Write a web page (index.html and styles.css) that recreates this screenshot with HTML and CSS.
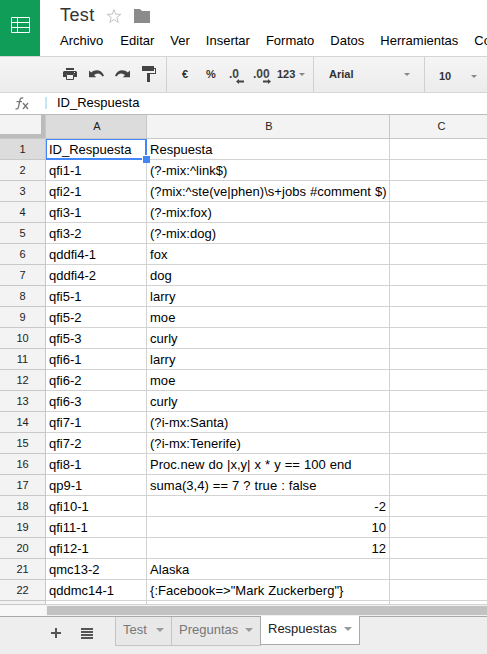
FILE: index.html
```html
<!DOCTYPE html>
<html lang="es">
<head>
<meta charset="utf-8">
<title>Test</title>
<link rel="stylesheet" href="styles.css">
</head>
<body>
<div class="app">
<header class="header">
  <div class="logo">
    <svg width="19" height="16" viewBox="0 0 19 16" fill="none" stroke="#fff"><path d="M.5.5h18v15H.5zM.5 5.5h18M.5 10.5h18M6.500.5v15" /></svg>
  </div>
  <div class="heading">
    <div class="title-row">
      <h1>Test</h1>
      <svg class="star" width="16" height="16" viewBox="0 0 16 16" fill="none" stroke="#c4c4c4"><path d="M8 1.500l1.700 4.700 5.200.100-4.100 3.100 1.500 5L8 11.500l-4.300 2.900 1.500-5L1.100 6.300l5.200-.100z"/></svg>
      <svg class="folder" width="16" height="14" viewBox="0 0 16 14" fill="#8b8b8b"><path d="M0 0h6l2 2h8v12H0z"/></svg>
    </div>
    <nav class="menu"><span>Archivo</span><span>Editar</span><span>Ver</span><span>Insertar</span><span>Formato</span><span>Datos</span><span>Herramientas</span><span>Co</span></nav>
  </div>
</header>
<div class="toolbar">
  <div class="group actions">
    <svg width="14" height="12" viewBox="0 0 14 12"><path fill="#444" d="M3 0h8v2H3zM1 3h12l1 1v5h-3V6H3v3H0V4z"/><path fill="none" stroke="#444" d="M3.500 6.500h7v5h-7z"/><path fill="#eee" d="M11 4h1v1h-1z"/></svg>
    <svg width="15" height="8" viewBox="0 0 15 8" fill="#444"><path d="M0 .5l2.200 2C6-.9 12.500-.8 15 5.800l-1.600.8C11.500 3 8 2.500 5 5l2.200 2.300H0z"/></svg>
    <svg width="15" height="8" viewBox="0 0 15 8" fill="#444"><path d="M15 .5l-2.200 2C9-.9 2.500-.8 0 5.800l1.600.8C3.500 3 7 2.500 10 5L7.800 7.300H15z"/></svg>
    <svg width="14" height="16" viewBox="0 0 14 16" fill="#444"><path d="M0 0h12v2h2v6H8v1h0v7H5V7h8V3h-1v2H0z"/></svg>
  </div>
  <div class="group formats">
    <span class="euro">€</span><span class="percent">%</span>
    <span class="decimal less">.0<svg width="8" height="5" viewBox="0 0 8 5" fill="#444"><path d="M0 2.500L3 0v1.500h5v2H3V5z"/></svg></span>
    <span class="decimal more">.00<svg width="8" height="5" viewBox="0 0 8 5" fill="#444"><path d="M8 2.500L5 0v1.500H0v2h5V5z"/></svg></span>
    <span class="number">123</span><i class="caret"></i>
  </div>
  <div class="group font"><span>Arial</span><i class="caret"></i></div>
  <div class="group size"><span>10</span><i class="caret"></i></div>
</div>
<div class="formula">
  <svg class="fx" width="15" height="14" viewBox="0 0 15 14" fill="none" stroke="#777" stroke-width="1.300"><path d="M8.300 1.200C6.400.3 5.400 1.200 5 3L3.500 9.800C3.100 11.700 2.300 12.300.5 11.800M1.500 4.600h5.500M8 6l5 6M13 6l-5 6"/></svg>
  <span class="divider"></span><span>ID_Respuesta</span>
</div>
<main class="sheet">
<table>
<colgroup><col class="col-n"><col class="col-a"><col class="col-b"><col class="col-c"></colgroup>
<thead><tr><th class="corner"></th><th class="current">A</th><th>B</th><th>C</th></tr></thead>
<tbody>
<tr><th class="current">1</th><td class="selected">ID_Respuesta</td><td>Respuesta</td><td></td></tr>
<tr><th>2</th><td>qfi1-1</td><td>(?-mix:^link$)</td><td></td></tr>
<tr><th>3</th><td>qfi2-1</td><td>(?mix:^ste(ve|phen)\s+jobs #comment $)</td><td></td></tr>
<tr><th>4</th><td>qfi3-1</td><td>(?-mix:fox)</td><td></td></tr>
<tr><th>5</th><td>qfi3-2</td><td>(?-mix:dog)</td><td></td></tr>
<tr><th>6</th><td>qddfi4-1</td><td>fox</td><td></td></tr>
<tr><th>7</th><td>qddfi4-2</td><td>dog</td><td></td></tr>
<tr><th>8</th><td>qfi5-1</td><td>larry</td><td></td></tr>
<tr><th>9</th><td>qfi5-2</td><td>moe</td><td></td></tr>
<tr><th>10</th><td>qfi5-3</td><td>curly</td><td></td></tr>
<tr><th>11</th><td>qfi6-1</td><td>larry</td><td></td></tr>
<tr><th>12</th><td>qfi6-2</td><td>moe</td><td></td></tr>
<tr><th>13</th><td>qfi6-3</td><td>curly</td><td></td></tr>
<tr><th>14</th><td>qfi7-1</td><td>(?i-mx:Santa)</td><td></td></tr>
<tr><th>15</th><td>qfi7-2</td><td>(?i-mx:Tenerife)</td><td></td></tr>
<tr><th>16</th><td>qfi8-1</td><td>Proc.new do |x,y| x * y == 100 end</td><td></td></tr>
<tr><th>17</th><td>qp9-1</td><td>suma(3,4) == 7 ? true : false</td><td></td></tr>
<tr><th>18</th><td>qfi10-1</td><td class="num">-2</td><td></td></tr>
<tr><th>19</th><td>qfi11-1</td><td class="num">10</td><td></td></tr>
<tr><th>20</th><td>qfi12-1</td><td class="num">12</td><td></td></tr>
<tr><th>21</th><td>qmc13-2</td><td>Alaska</td><td></td></tr>
<tr><th>22</th><td>qddmc14-1</td><td>{:Facebook=&gt;"Mark Zuckerberg"}</td><td></td></tr>
<tr class="partial"><th></th><td></td><td></td><td></td></tr>
</tbody>
</table>
<div class="scroll"><div class="thumb"></div></div>
</main>
<footer class="tabs">
  <svg class="add" width="10" height="10" viewBox="0 0 10 10" fill="#555"><path d="M4 0h2v4h4v2H6v4H4V6H0V4h4z"/></svg>
  <svg class="list" width="12" height="11" viewBox="0 0 12 11" fill="#555"><path d="M0 0h12v2H0zM0 3h12v2H0zM0 6h12v2H0zM0 9h12v2H0z"/></svg>
  <div class="tab test"><span>Test</span><i class="caret"></i></div>
  <div class="tab preguntas"><span>Preguntas</span><i class="caret"></i></div>
  <div class="tab active"><span>Respuestas</span><i class="caret"></i></div>
</footer>
</div>
</body>
</html>
```
FILE: styles.css
```css
* { box-sizing: border-box; }
body { margin: 0; font: 13px "Liberation Sans", Arial, sans-serif; color: #000; background: #fff; }
svg { display: block; flex: none; }
.app { width: 487px; height: 654px; overflow: hidden; }

.header { display: flex; height: 56px; }
.logo { width: 40px; flex: none; background: #0f9d58; padding: 17px 0 0 11px; }
.heading { padding-left: 20px; }
.title-row { display: flex; height: 31px; }
h1 { margin: 4px 0 0; width: 46px; font-size: 18px; font-weight: 400; line-height: 22px; letter-spacing: .4px; color: #333; }
.star { margin-top: 8px; }
.folder { margin: 9px 0 0 12px; }
.menu { display: flex; gap: 16px; padding-top: 2px; line-height: 16px; white-space: nowrap; }
.menu span:first-child { margin-right: 1px; }

.toolbar { display: flex; height: 37px; border-top: 1px solid #d5d5d5; border-bottom: 1px solid #d5d5d5; background: linear-gradient(#f5f5f5, #ececec); font-size: 11px; font-weight: 700; color: #333; }
.group { display: flex; flex: none; border-right: 1px solid #d0d0d0; line-height: 13px; }
.actions { width: 167px; padding: 11px 0 0 63px; }
.actions svg:nth-child(2) { margin: 2px 0 0 12px; }
.actions svg:nth-child(3) { margin: 2px 0 0 11px; }
.actions svg:nth-child(4) { margin: -2px 0 0 12px; }
.formats { width: 147px; padding: 11px 0 0 15px; }
.euro { width: 24px; }
.percent { width: 23px; }
.decimal { position: relative; font-size: 12px; color: #444; }
.decimal svg { position: absolute; top: 11px; }
.less { width: 24px; }
.less svg { left: 7px; }
.more { width: 24px; }
.more svg { left: 10px; }
.number { width: 22px; }
.caret { width: 0; height: 0; border: 3px solid transparent; border-top-color: #888; border-bottom: 0; flex: none; margin-top: 5px; }
.font { width: 111px; padding: 11px 0 0 15px; }
.font span { width: 75px; }
.size { padding: 13px 0 0 14px; border: 0; width: 62px; }
.size span { width: 32px; }

.formula { display: flex; height: 21px; line-height: 19px; }
.fx { margin: 4px 0 0 15px; }
.divider { width: 2px; height: 12px; margin: 4px 10px 0 15px; border-left: 1px solid #ead9cd; background: #c5e5f7; }

.sheet { height: 502px; display: flex; flex-direction: column; border-top: 1px solid #bbb; }
table { width: 492px; flex: none; table-layout: fixed; border-collapse: separate; border-spacing: 0; }
.col-n { width: 46px; }
.col-a { width: 101px; }
.col-b { width: 243px; }
.col-c { width: 102px; }
th, td { height: 21px; padding: 0; border: solid #d3d3d3; border-width: 0 1px 1px 0; line-height: 20px; white-space: nowrap; overflow: hidden; }
th { background: #f3f3f3; border-color: #c8c8c8; font-size: 11px; font-weight: 400; color: #222; }
thead th { height: 24px; line-height: 23px; padding-left: 2px; }
td { padding: 1px 0 0 3px; line-height: 19px; }
td:nth-child(3) { word-spacing: .35px; letter-spacing: .035px; }
.current { background: #dcdcdc; }
thead .corner { background: linear-gradient(#f3f3f3, #f3f3f3) 0 0 / 41px 19px no-repeat #bcbcbc; }
.selected { position: relative; overflow: visible; box-shadow: inset 1px 1px #4285f4, inset -1px -1px #4285f4; border-color: #4285f4; }
.selected::after { content: ""; position: absolute; right: -4px; bottom: -4px; width: 7px; height: 7px; background: #4285f4; border: solid #fff; border-width: 1px 0 0 1px; }
.num { text-align: right; padding-right: 3px; }
.partial th, .partial td { height: 4px; padding: 0; line-height: 0; }
.scroll { height: 11px; padding: 1px 0 0; border-left: 46px solid #f8f8f8; background: #f2f2f2; }
.thumb { height: 9px; margin-left: 1px; background: #c2c2c2; }

.tabs { display: flex; height: 38px; border-top: 1px solid #a9a9a9; background: #eee; font-size: 13px; }
.add { margin: 11px 0 0 51px; }
.list { margin: 11px 22px 0 20px; }
.tab { display: flex; height: 29px; margin-left: -1px; padding: 3px 0 0 8px; line-height: 20px; color: #777; background: #e8e8e8; border: 1px solid #c4c4c4; border-top: 0; }
.tab .caret { border-width: 4px 4px 0; margin-top: 8px; border-top-color: #999; }
.test { width: 57px; margin-left: 0; padding-left: 7px; }
.test span { width: 33px; }
.preguntas { width: 90px; padding-left: 7px; }
.preguntas span { width: 66px; }
.active { width: 100px; height: 29px; margin-top: -1px; background: #fff; color: #222; border-color: #aaa; padding-left: 7px; }
.active span { width: 76px; }
```
